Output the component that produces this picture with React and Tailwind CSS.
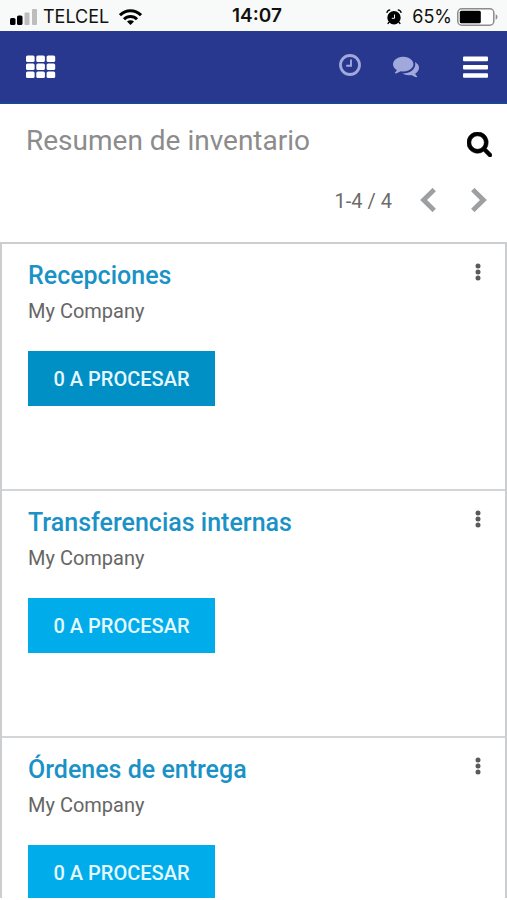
const operations = [
  { name: 'Recepciones', company: 'My Company', pending: 0, active: true },
  { name: 'Transferencias internas', company: 'My Company', pending: 0 },
  { name: 'Órdenes de entrega', company: 'My Company', pending: 0 },
];

function SignalIcon() {
  return (
    <svg className="h-4 w-[27px]" viewBox="0 0 27 16" aria-hidden="true">
      <rect x="0" y="9" width="5.5" height="7" rx="1.6" fill="#000" />
      <rect x="7" y="6.5" width="5.5" height="9.5" rx="1.6" fill="#000" />
      <rect x="14.5" y="3.5" width="5" height="12.5" rx="1" fill="#bdbdbd" />
      <rect x="22" y="0" width="5" height="16" rx="1" fill="#bdbdbd" />
    </svg>
  );
}

function WifiIcon() {
  return (
    <svg className="h-4 w-[23px]" viewBox="0 0 23 16" fill="none" stroke="#000" strokeWidth="3" aria-hidden="true">
      <path d="M1 6.2C7 .1 16 .1 22 6.2" />
      <path d="M5 10.3c3.8-3.8 9.2-3.8 13 0" />
      <path d="M11.5 16 8 12.6c2-1.8 5-1.8 7 0Z" fill="#000" stroke="none" />
    </svg>
  );
}

function AlarmIcon() {
  return (
    <svg className="h-4 w-4" viewBox="0 0 16 16" aria-hidden="true">
      <circle cx="8" cy="8.8" r="6.7" fill="#000" />
      <path d="m3 13-1.2 2M13 13l1.2 2" stroke="#000" strokeWidth="1.4" />
      <path d="M.8 3.8C1.2 2.1 2.4 1 4.2.8M15.2 3.8C14.8 2.1 13.6 1 11.8.8" fill="none" stroke="#000" strokeWidth="1.3" />
      <path d="M8.5 5.6v3.7H5.8" fill="none" stroke="#f8f8f8" strokeWidth="1" />
    </svg>
  );
}

function BatteryIcon() {
  return (
    <svg className="h-[18px] w-[41px]" viewBox="0 0 41 18" aria-hidden="true">
      <rect x=".8" y=".8" width="36" height="16.4" rx="4" fill="#fff" stroke="#8c8c8c" strokeWidth="1.5" />
      <rect x="2.8" y="2.8" width="21" height="12.4" rx="1.5" fill="#000" />
      <path d="M38.7 6.3c2.3.8 2.3 4.6 0 5.4Z" fill="#8c8c8c" />
    </svg>
  );
}

function AppsIcon() {
  return (
    <svg className="h-6 w-[30px]" viewBox="0 0 30 24" fill="#fff" aria-hidden="true">
      {[0, 8, 16].map((y) =>
        [0, 10.3, 20.6].map((x) => (
          <rect key={`${x}-${y}`} x={x} y={y + 0.4} width="8.6" height="6.6" rx="1.6" />
        ))
      )}
    </svg>
  );
}

function ClockIcon() {
  return (
    <svg className="h-[22px] w-[22px]" viewBox="0 0 22 22" fill="none" stroke="currentColor" aria-hidden="true">
      <circle cx="11" cy="11" r="9.5" strokeWidth="2.8" />
      <path d="M12 5.5v6.3H7.2" strokeWidth="1.9" />
    </svg>
  );
}

function CommentsIcon() {
  return (
    <svg className="h-[26px] w-[26px]" viewBox="0 0 1792 1792" fill="currentColor" aria-hidden="true">
      <path d="M1408 768q0 139-94 257t-256.5 186.5-353.5 68.5q-86 0-176-16-124 88-278 128-36 9-86 16h-3q-11 0-20.5-8t-11.5-21q-1-3-1-6.5t.5-6.5 2-6l2.5-5 3.5-5.5 4-5 4.5-5 4-4.5q5-6 23-25t26-29.5 22.5-29 25-38.5 20.5-44q-124-72-195-177t-71-224q0-139 94-257t256.5-186.5 353.5-68.5 353.5 68.5 256.5 186.5 94 257zm384 256q0 120-71 224.5t-195 176.5q10 24 20.5 44t25 38.5 22.5 29 26 29.5 23 25q1 1 4 4.5t4.5 5 4 5 3.5 5.5l2.5 5 2 6 .5 6.5-1 6.5q-3 14-13 22t-22 7q-50-7-86-16-154-40-278-128-90 16-176 16-271 0-472-132 58 4 88 4 161 0 309-45t264-129q125-92 192-212t67-254q0-77-23-152 129 71 204 178t75 230z" />
    </svg>
  );
}

function MenuIcon() {
  return (
    <svg className="h-[22px] w-[25px]" viewBox="0 0 25 22" fill="#fff" aria-hidden="true">
      <rect y=".6" width="25" height="4.6" rx="1" />
      <rect y="8.9" width="25" height="4.6" rx="1" />
      <rect y="17.2" width="25" height="4.6" rx="1" />
    </svg>
  );
}

function SearchIcon() {
  return (
    <svg className="h-[25px] w-[25px]" viewBox="64 128 1664 1664" stroke="#000" strokeWidth="40" aria-hidden="true">
      <path d="M1216 832q0-185-131.5-316.5t-316.5-131.5-316.5 131.5-131.5 316.5 131.5 316.5 316.5 131.5 316.5-131.5 131.5-316.5zm512 832q0 52-38 90t-90 38q-54 0-90-38l-343-342q-179 124-399 124-143 0-273.5-55.5t-225-150-150-225-55.5-273.5 55.5-273.5 150-225 225-150 273.5-55.5 273.5 55.5 225 150 150 225 55.5 273.5q0 220-124 399l343 343q37 37 37 90z" />
    </svg>
  );
}

function Chevron({ d }) {
  return (
    <svg className="h-6 w-4" viewBox="0 0 16 24" fill="none" stroke="#9d9fa1" strokeWidth="4.8" aria-hidden="true">
      <path d={d} />
    </svg>
  );
}

function DotsIcon() {
  return (
    <svg className="h-[18px] w-[6px]" viewBox="0 0 6 18" fill="#5a5a5a" aria-hidden="true">
      <circle cx="3" cy="3" r="2.5" />
      <circle cx="3" cy="9" r="2.5" />
      <circle cx="3" cy="15" r="2.5" />
    </svg>
  );
}

function OperationCard({ name, company, pending, active }) {
  return (
    <article className="flex h-[247px] shrink-0 items-start justify-between border-b-2 border-[#d3d6d9] pr-6 pl-[26px]">
      <div className="pt-4">
        <h2 className="text-[25px] leading-8 font-medium text-[#1a92c6]">
          <a href="#">{name}</a>
        </h2>
        <p className="pt-[5px] text-[20px] leading-7 text-[#666]">{company}</p>
        <button
          type="button"
          className={`mt-[26px] h-[55px] w-[187px] text-[20px] font-medium text-[#e6f8ff] ${active ? 'bg-[#0090c6]' : 'bg-[#00adea]'}`}
        >
          {pending} A PROCESAR
        </button>
      </div>
      <button type="button" aria-label="Opciones" className="pt-[19px]">
        <DotsIcon />
      </button>
    </article>
  );
}

export default function App() {
  return (
    <div className="flex h-screen flex-col overflow-hidden bg-white pb-[2px] font-[Roboto,sans-serif]">
      <div className="grid h-[31px] shrink-0 grid-cols-[1fr_auto_1fr] items-center bg-[#f8f9f9] pt-[2px] pr-[9px] pl-[10px] font-[Inter,sans-serif] text-[18px] text-[#111]">
        <div className="flex items-center gap-[6px]">
          <SignalIcon />
          <span className="mr-1">TELCEL</span>
          <WifiIcon />
        </div>
        <span className="pl-[6px] text-[19px] font-semibold">14:07</span>
        <div className="flex items-center justify-end gap-[5px]">
          <AlarmIcon />
          <span className="ml-[5px]">65%</span>
          <BatteryIcon />
        </div>
      </div>

      <nav className="flex h-[73px] shrink-0 items-center border-b-2 border-[#20449a] bg-[#29388f] pr-[19px] pl-[26px]">
        <button type="button" aria-label="Aplicaciones"><AppsIcon /></button>
        <div className="ml-auto flex items-center text-[#a0a8dc]">
          <button type="button" aria-label="Actividades" className="mr-8 pb-[3px]"><ClockIcon /></button>
          <button type="button" aria-label="Conversaciones" className="mr-11 pb-[2px]"><CommentsIcon /></button>
          <button type="button" aria-label="Menú"><MenuIcon /></button>
        </div>
      </nav>

      <header className="h-[138px] shrink-0">
        <div className="flex items-center justify-between pt-5 pr-[15px] pl-[26px]">
          <h1 className="text-[28px] leading-8 text-[#8c8c8c]">Resumen de inventario</h1>
          <button type="button" aria-label="Buscar" className="pt-2"><SearchIcon /></button>
        </div>
        <div className="flex items-center justify-end pt-7 pr-5">
          <span className="mr-7 text-[20px] leading-8 text-[#6b6b6b]">1-4 / 4</span>
          <button type="button" aria-label="Anterior" className="mr-[35px] pb-[2px]"><Chevron d="M14.2 1.6 3.6 12l10.6 10.4" /></button>
          <button type="button" aria-label="Siguiente" className="pb-[2px]"><Chevron d="M1.8 1.6 12.4 12 1.8 22.4" /></button>
        </div>
      </header>

      <main className="min-h-0 flex-1 overflow-hidden border-x-2 border-t-2 border-[#cbcdcf]">
        {operations.map((operation) => (
          <OperationCard key={operation.name} {...operation} />
        ))}
      </main>
    </div>
  );
}
